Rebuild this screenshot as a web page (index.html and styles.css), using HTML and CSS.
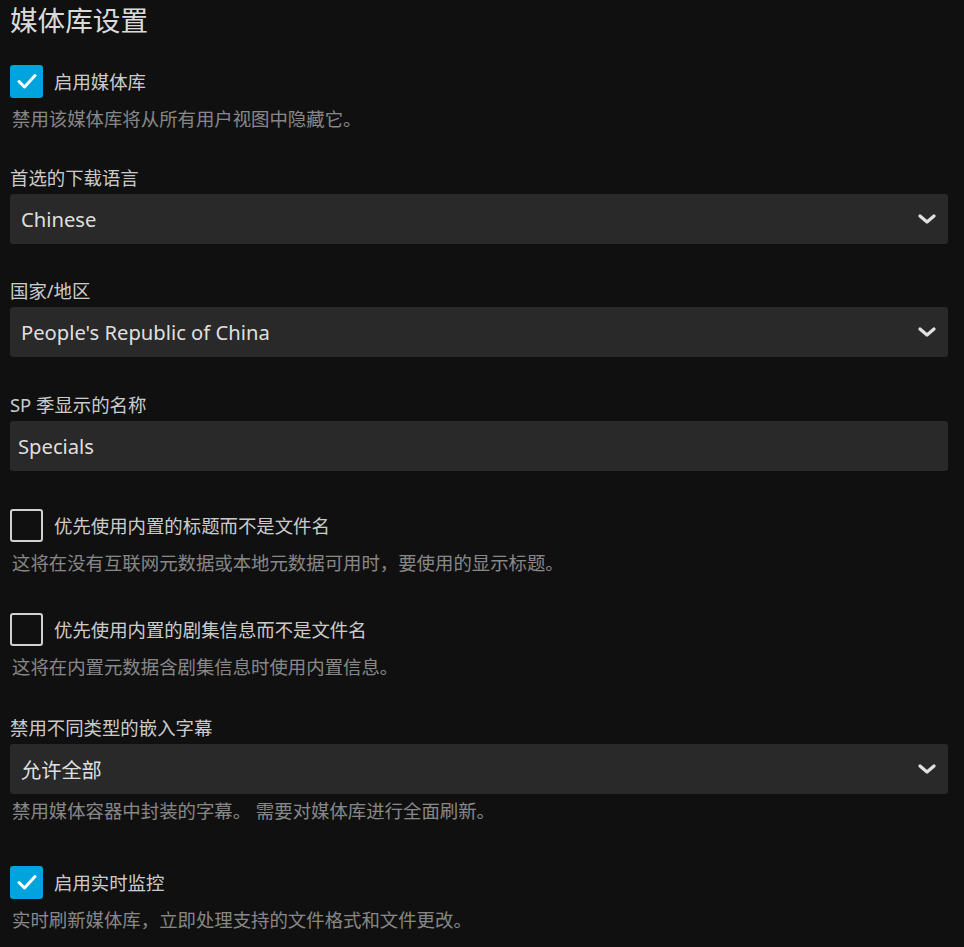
FILE: index.html
```html
<!DOCTYPE html>
<html lang="zh-CN">
<head>
    <meta charset="UTF-8">
    <meta name="viewport" content="width=device-width, initial-scale=1.0">
    <title>媒体库设置</title>
    <link rel="stylesheet" href="styles.css">
</head>
<body>
    <div class="container">
        <h1>媒体库设置</h1>

        <div class="check-field">
            <label class="check-row">
                <span class="box checked">
                    <svg viewBox="0 0 24 24" width="24" height="24"><polyline points="4,12.5 9.5,18 20,6.5"/></svg>
                </span>
                <span class="check-label">启用媒体库</span>
            </label>
            <div class="desc">禁用该媒体库将从所有用户视图中隐藏它。</div>
        </div>

        <div class="field">
            <div class="field-label">首选的下载语言</div>
            <div class="select">
                <span>Chinese</span>
                <svg class="chevron" viewBox="0 0 18 10" width="18" height="10"><polyline points="2,2 9,8 16,2"/></svg>
            </div>
        </div>

        <div class="field">
            <div class="field-label">国家/地区</div>
            <div class="select">
                <span>People's Republic of China</span>
                <svg class="chevron" viewBox="0 0 18 10" width="18" height="10"><polyline points="2,2 9,8 16,2"/></svg>
            </div>
        </div>

        <div class="field">
            <div class="field-label">SP 季显示的名称</div>
            <input type="text" class="text-input" value="Specials">
        </div>

        <div class="check-field">
            <label class="check-row">
                <span class="box"></span>
                <span class="check-label">优先使用内置的标题而不是文件名</span>
            </label>
            <div class="desc">这将在没有互联网元数据或本地元数据可用时，要使用的显示标题。</div>
        </div>

        <div class="check-field">
            <label class="check-row">
                <span class="box"></span>
                <span class="check-label">优先使用内置的剧集信息而不是文件名</span>
            </label>
            <div class="desc">这将在内置元数据含剧集信息时使用内置信息。</div>
        </div>

        <div class="field with-desc">
            <div class="field-label">禁用不同类型的嵌入字幕</div>
            <div class="select">
                <span>允许全部</span>
                <svg class="chevron" viewBox="0 0 18 10" width="18" height="10"><polyline points="2,2 9,8 16,2"/></svg>
            </div>
            <div class="desc">禁用媒体容器中封装的字幕。 需要对媒体库进行全面刷新。</div>
        </div>

        <div class="check-field">
            <label class="check-row">
                <span class="box checked">
                    <svg viewBox="0 0 24 24" width="24" height="24"><polyline points="4,12.5 9.5,18 20,6.5"/></svg>
                </span>
                <span class="check-label">启用实时监控</span>
            </label>
            <div class="desc">实时刷新媒体库，立即处理支持的文件格式和文件更改。</div>
        </div>
    </div>
</body>
</html>
```

FILE: styles.css
```css
body {
    margin: 0;
    padding: 0;
    background-color: #101010;
    color: rgba(255, 255, 255, 0.8);
    font-family: "Noto Sans", "Noto Sans CJK SC", sans-serif;
    font-size: 18.4px;
}
.container {
    padding: 0 16px 0 10px;
}
h1 {
    margin: 0;
    padding-top: 4px;
    font-size: 27.6px;
    font-weight: 400;
    line-height: 33px;
    color: rgba(255, 255, 255, 0.87);
}

/* spacing between rows */
.check-field {
    margin-top: 27px;
}
.field + .check-field {
    margin-top: 37.5px;
}
.check-field + .check-field {
    margin-top: 38px;
}
.field.with-desc + .check-field {
    margin-top: 42px;
}
.check-field + .field {
    margin-top: 34px;
}
.check-field + .field.with-desc {
    margin-top: 36px;
}
.field + .field {
    margin-top: 34.5px;
}

.check-row {
    display: flex;
    align-items: center;
    gap: 11px;
    height: 34px;
}
.box {
    box-sizing: border-box;
    width: 33px;
    height: 33px;
    border: 2px solid #d0d0d0;
    border-radius: 3px;
    display: flex;
    align-items: center;
    justify-content: center;
}
.box.checked {
    border-color: #00a4dc;
    background-color: #00a4dc;
}
.box svg polyline {
    fill: none;
    stroke: #fff;
    stroke-width: 3;
    stroke-linecap: round;
    stroke-linejoin: round;
}
.check-label {
    line-height: 25px;
}
.desc {
    margin-top: 7.5px;
    padding-left: 2px;
    font-size: 18.4px;
    line-height: 25px;
    color: rgba(255, 255, 255, 0.5);
}
.field-label {
    line-height: 25px;
    margin-bottom: 4px;
}
.select {
    box-sizing: border-box;
    height: 50px;
    background-color: #292929;
    border-radius: 3px;
    display: flex;
    align-items: center;
    justify-content: space-between;
    padding: 0 12px 0 11px;
    font-size: 20.2px;
    color: rgba(255, 255, 255, 0.87);
}
.chevron polyline {
    fill: none;
    stroke: #e0e0e0;
    stroke-width: 3.2;
    stroke-linecap: round;
    stroke-linejoin: round;
}
.field .desc {
    margin-top: 4px;
}
.text-input {
    display: block;
    box-sizing: border-box;
    width: 100%;
    height: 50px;
    margin: 0;
    padding: 0 8px;
    border: none;
    border-radius: 3px;
    background-color: #292929;
    font-family: inherit;
    font-size: 20.2px;
    color: rgba(255, 255, 255, 0.87);
    outline: none;
}
```
